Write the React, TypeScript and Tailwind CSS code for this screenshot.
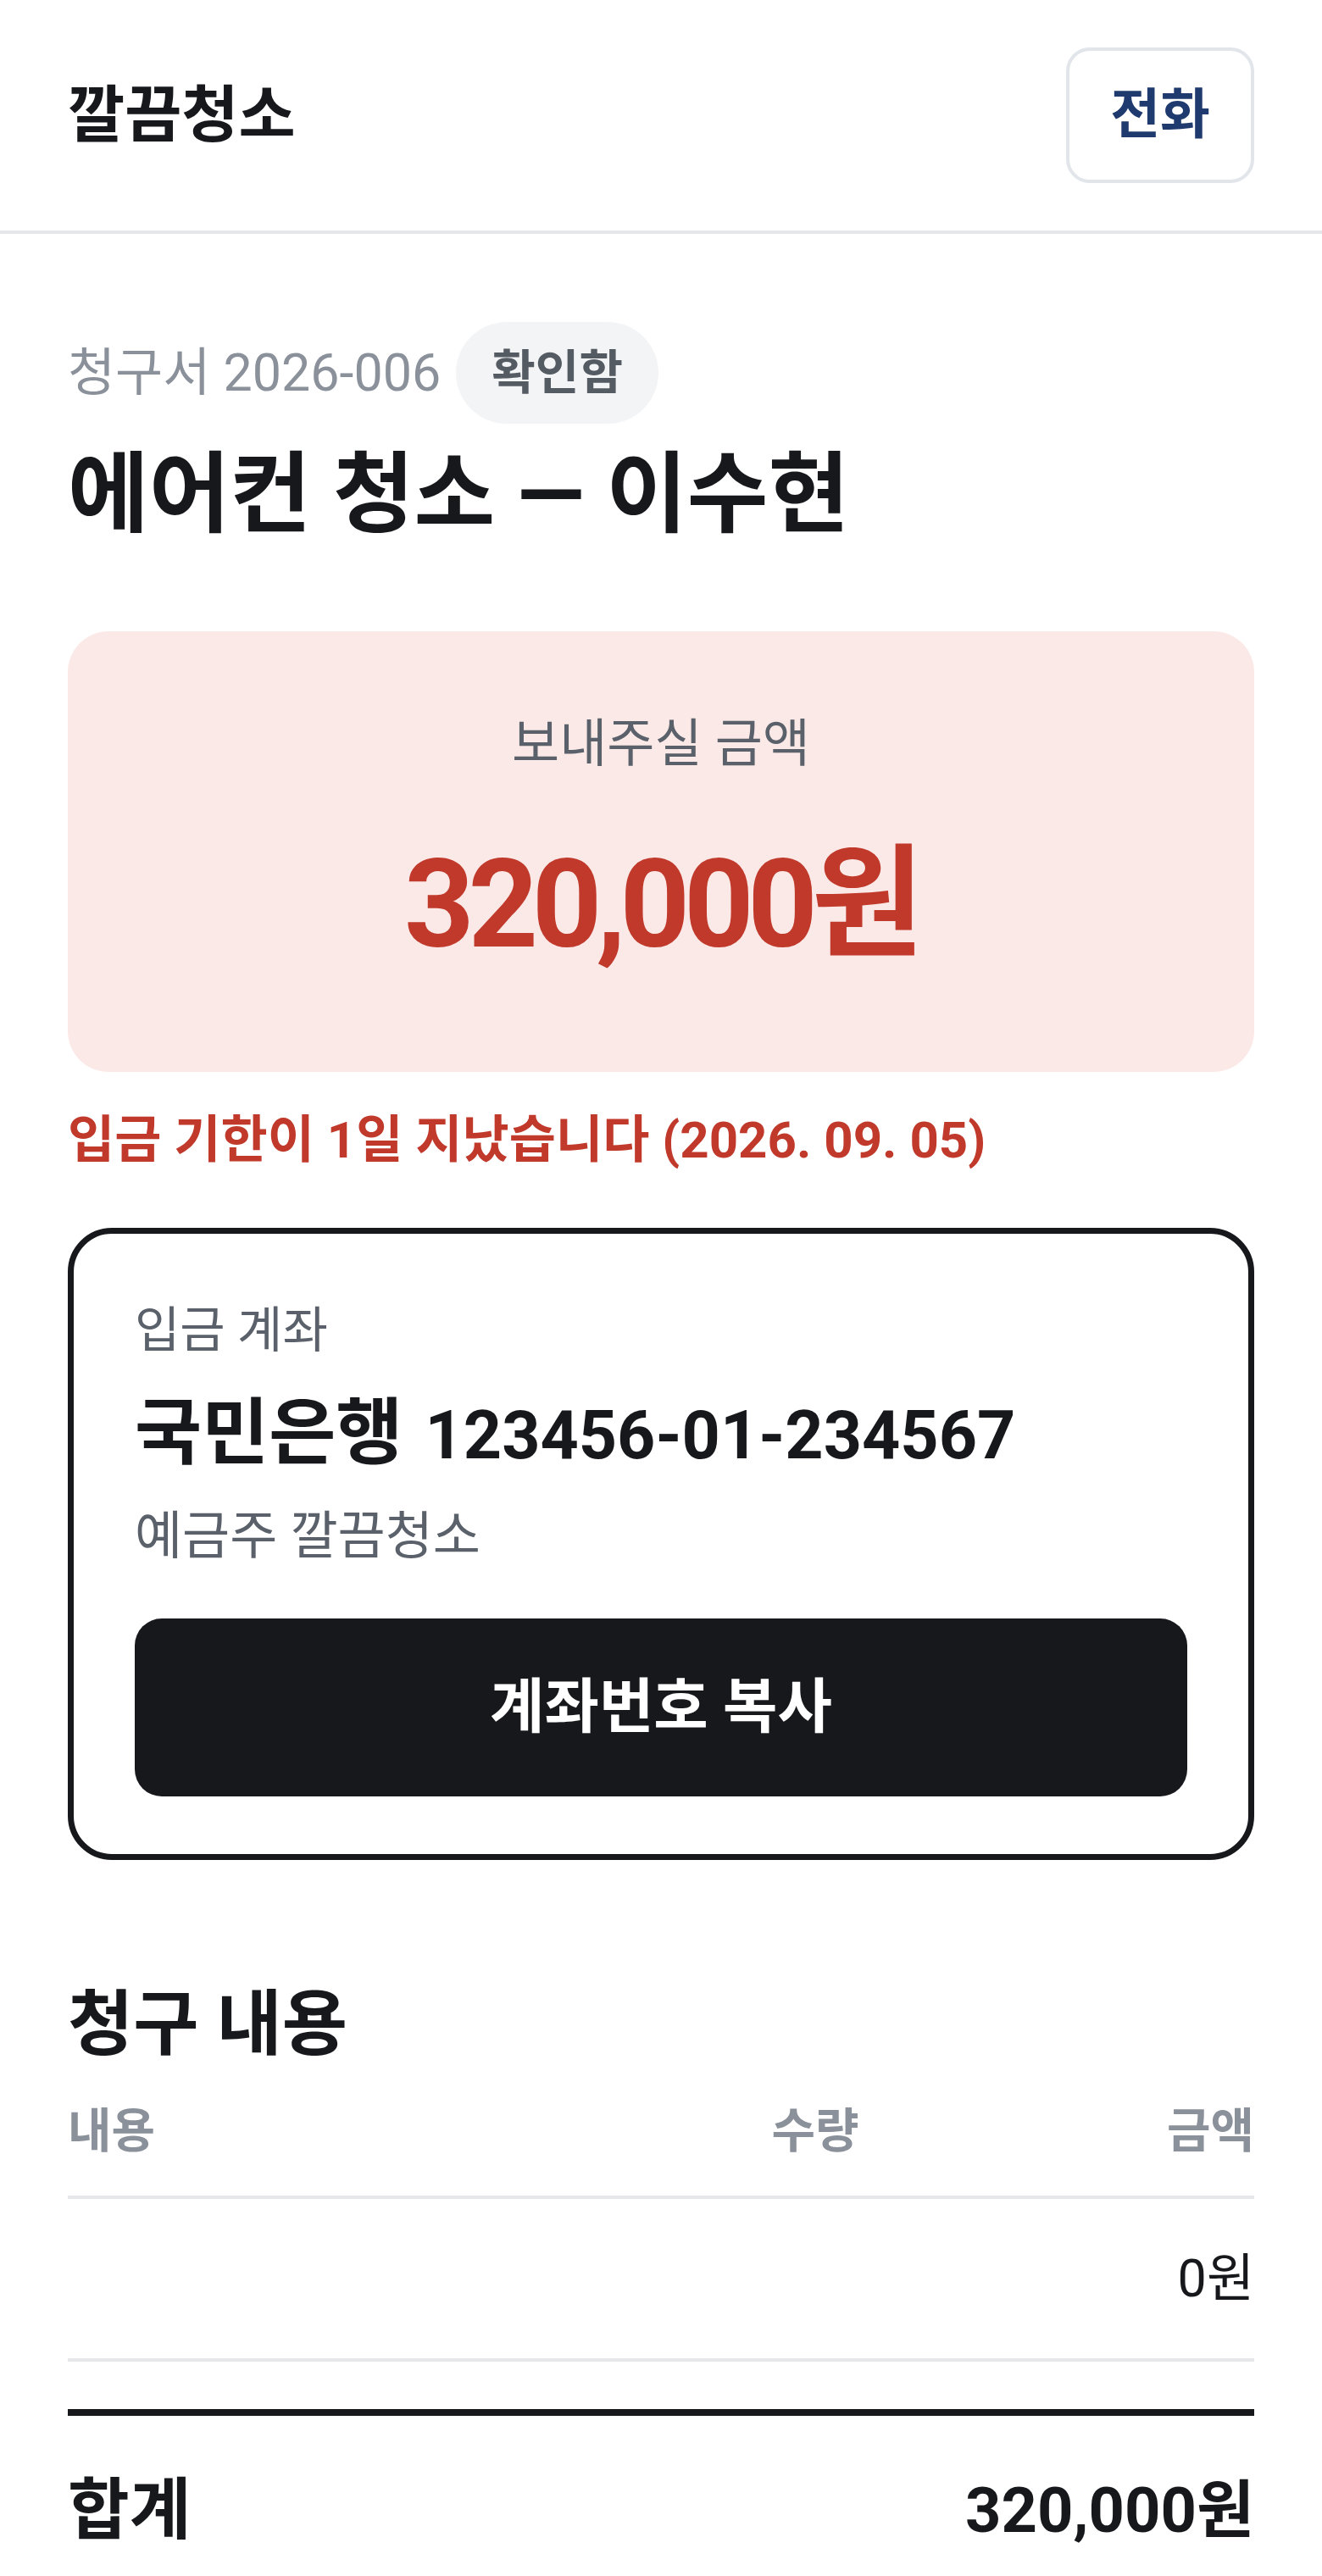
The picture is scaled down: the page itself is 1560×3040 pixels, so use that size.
const items = [{ name: '', qty: '', amount: '0원' }];

const App = () => {
  return (
    <div className="min-h-screen w-full bg-white font-[family-name:Roboto,'Noto_Sans_CJK_KR',sans-serif] text-[#17181c]">
      {/* Header */}
      <header className="flex h-[276px] items-center justify-between border-b-4 border-[#e5e7eb] px-[80px]">
        <h1 className="text-[73px] font-bold leading-none">깔끔청소</h1>
        <button className="flex h-[160px] items-center rounded-[28px] border-4 border-[#e2e5ea] bg-white px-[48px] text-[64px] font-bold text-[#1e3a6e]">
          전화
        </button>
      </header>

      <main className="px-[80px] pt-[104px]">
        {/* Invoice meta */}
        <div className="flex items-center gap-[18px]">
          <span className="text-[61px] leading-none text-[#8b919a]">청구서 2026-006</span>
          <span className="flex h-[120px] items-center rounded-full bg-[#f3f4f6] px-[42px] text-[56px] font-bold text-[#555b63]">
            확인함
          </span>
        </div>
        <h2 className="mt-[20px] text-[104px] font-bold leading-[130px]">에어컨 청소 — 이수현</h2>

        {/* Amount due */}
        <div className="mt-[95px] flex h-[520px] flex-col items-center rounded-[48px] bg-[#fbe9e7] pt-[88px]">
          <p className="text-[61px] leading-[90px] text-[#5b616a]">보내주실 금액</p>
          <p className="mt-[58px] text-[144px] font-bold leading-[173px] tracking-tighter text-[#c0392b]">
            320,000원
          </p>
        </div>
        <p className="mt-[36px] text-[60px] font-bold leading-[90px] text-[#c0392b]">
          입금 기한이 1일 지났습니다 (2026. 09. 05)
        </p>

        {/* Bank account */}
        <div className="mt-[58px] rounded-[52px] border-[7px] border-[#17181c] px-[72px] pb-[68px] pt-[72px]">
          <p className="text-[58px] leading-[84px] text-[#5b616a]">입금 계좌</p>
          <p className="mt-[20px] flex items-baseline gap-[26px] font-bold leading-[120px]">
            <span className="text-[86px]">국민은행</span>
            <span className="text-[79px]">123456-01-234567</span>
          </p>
          <p className="mt-[14px] text-[61px] leading-[90px] text-[#5b616a]">예금주 깔끔청소</p>
          <button className="mt-[52px] flex h-[210px] w-full items-center justify-center rounded-[32px] bg-[#17181c] text-[70px] font-bold text-white">
            계좌번호 복사
          </button>
        </div>

        {/* Line items */}
        <h3 className="mt-[139px] text-[84px] font-bold leading-[112px]">청구 내용</h3>
        <div className="mt-[27px] grid grid-cols-[1fr_200px_418px] border-b-4 border-[#e5e7eb] pb-[34px] text-[56px] font-semibold leading-[84px] text-[#8b919a]">
          <span>내용</span>
          <span className="text-center">수량</span>
          <span className="text-right">금액</span>
        </div>
        {items.map((item, i) => (
          <div
            key={i}
            className="grid grid-cols-[1fr_200px_418px] border-b-4 border-[#e5e7eb] py-[49px] text-[61px] leading-[90px]"
          >
            <span>{item.name}</span>
            <span className="text-center">{item.qty}</span>
            <span className="text-right">{item.amount}</span>
          </div>
        ))}

        {/* Total */}
        <div className="mt-[56px] flex items-center justify-between border-t-8 border-[#17181c] pb-[80px] pt-[56px] font-bold leading-[112px]">
          <span className="text-[79px]">합계</span>
          <span className="text-[74px]">320,000원</span>
        </div>
      </main>
    </div>
  );
};

export default App;
